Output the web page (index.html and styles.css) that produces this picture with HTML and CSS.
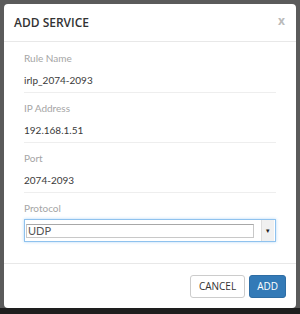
FILE: index.html
```html
<!DOCTYPE html>
<html lang="en">
<head>
    <meta charset="UTF-8">
    <meta name="viewport" content="width=device-width, initial-scale=1.0">
    <title>Add Service</title>
    <link rel="stylesheet" href="styles.css">
</head>
<body>
    <div class="modal">
        <div class="modal-header">
            <h4>ADD SERVICE</h4>
            <span class="close">x</span>
        </div>
        <div class="modal-body">
            <div class="field">
                <label>Rule Name</label>
                <div class="value">irlp_2074-2093</div>
            </div>
            <div class="field">
                <label>IP Address</label>
                <div class="value">192.168.1.51</div>
            </div>
            <div class="field">
                <label>Port</label>
                <div class="value">2074-2093</div>
            </div>
            <div class="field last">
                <label>Protocol</label>
                <div class="select">
                    <div class="select-text">UDP</div>
                    <div class="select-arrow">&#9662;</div>
                </div>
            </div>
        </div>
        <div class="modal-footer">
            <button class="btn">CANCEL</button>
            <button class="btn btn-primary">ADD</button>
        </div>
    </div>
</body>
</html>
```

FILE: styles.css
```css
html, body {
    margin: 0;
    height: 100%;
}
body {
    background: linear-gradient(#5b5b5b 0, #5b5b5b 308px, #1e1e1e 308px);
    font-family: "Open Sans", sans-serif;
    padding: 4px 4px 0 4px;
    box-sizing: border-box;
}
.modal {
    background: #fff;
    width: 292px;
    height: 304px;
    border-radius: 4px;
    display: flex;
    flex-direction: column;
}
.modal-header {
    height: 38px;
    box-sizing: border-box;
    border-bottom: 1px solid #e8e8e8;
    display: flex;
    align-items: center;
    justify-content: space-between;
    padding: 0 10px;
}
.modal-header h4 {
    margin: 0;
    font-size: 12px;
    font-weight: 600;
    color: #333;
}
.close {
    color: #bbb;
    font-size: 12px;
    font-weight: bold;
    margin-top: -4px;
    margin-right: 1px;
}
.modal-body {
    padding: 1px 20px 0 20px;
    height: 222px;
    box-sizing: border-box;
    border-bottom: 1px solid #e8e8e8;
}
.field {
    padding: 7px 0 4px;
    border-bottom: 1px solid #eee;
}
.field label {
    display: block;
    font-family: Lato, sans-serif;
    font-size: 10px;
    color: #a5a5a5;
    line-height: 16px;
}
.value {
    font-family: Lato, sans-serif;
    font-size: 10px;
    color: #3a3a3a;
    line-height: 16px;
    margin-top: 6px;
}
.field.last {
    border-bottom: none;
}
.select {
    margin-top: 3px;
    height: 23px;
    box-sizing: border-box;
    border: 1px solid #8fc2ee;
    box-shadow: 0 0 3px #b5d8f6;
    display: flex;
    align-items: center;
    padding: 0 1px;
}
.select-text {
    flex: 0 0 228px;
    height: 14px;
    box-sizing: border-box;
    border: 1px solid #c8c8c8;
    border-top-color: #a8a8a8;
    font-family: Lato, sans-serif;
    font-size: 11px;
    color: #555;
    line-height: 12px;
    padding-left: 1px;
}
.select-arrow {
    margin-left: auto;
    width: 12px;
    height: 21px;
    background: #f0f0f0;
    border-left: 1px solid #ddd;
    font-size: 7px;
    color: #222;
    text-align: center;
    line-height: 21px;
}
.modal-footer {
    flex: 1;
    display: flex;
    align-items: center;
    justify-content: flex-end;
    gap: 4px;
    padding: 0 10px;
}
.btn {
    font-family: "Open Sans", sans-serif;
    font-size: 10px;
    height: 23px;
    padding: 0 8px;
    border: 1px solid #ccc;
    border-radius: 3px;
    background: #fff;
    color: #333;
}
.btn-primary {
    background: #337ab7;
    border-color: #2e6da4;
    color: #fff;
    padding: 0 7px;
}
```
